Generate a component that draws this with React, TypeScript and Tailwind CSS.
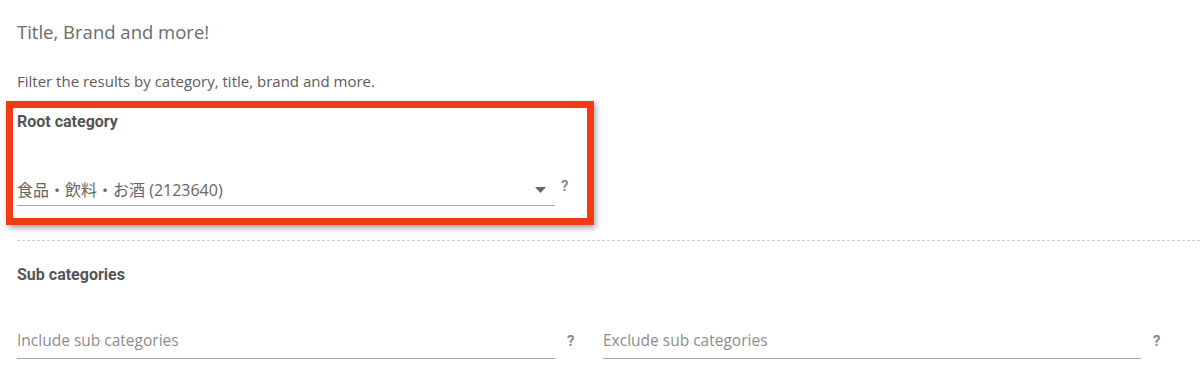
import React from 'react';

const sans = "font-['Open_Sans','Noto_Sans_CJK_JP',sans-serif]";
const bold = "font-['Roboto','Noto_Sans',sans-serif]";

const Help: React.FC<{ className?: string }> = ({ className = '' }) => (
  <span className={`${bold} text-[15px] leading-[16px] font-bold text-[#8a8a8a] ${className}`}>?</span>
);

const Field: React.FC<{ placeholder: string }> = ({ placeholder }) => (
  <div className="flex items-end">
    <div className="w-[538px] border-b border-[#a8a8a8] pb-[6px]">
      <span className={`${sans} text-[15.5px] leading-[20px] text-[#8c8c8c]`}>{placeholder}</span>
    </div>
    <Help className="ml-[12px] mb-[10px]" />
  </div>
);

const App: React.FC = () => {
  return (
    <div className="relative w-[1200px] h-[385px] overflow-hidden bg-white">
      <div className="pl-[17px] pt-[20px]">
        <h2 className={`${sans} text-[18.5px] leading-[24px] text-[#6b6b6b]`}>Title, Brand and more!</h2>
        <p className={`${sans} mt-[27px] text-[15px] leading-[20px] text-[#5c5c5c]`}>
          Filter the results by category, title, brand and more.
        </p>

        <div className={`${bold} mt-[21px] text-[16px] leading-[20px] font-bold text-[#555]`}>Root category</div>

        <div className="mt-[46px] flex items-end">
          <div className="w-[538px] flex items-center justify-between border-b border-[#a8a8a8] pb-[4px]">
            <span className={`${sans} text-[16px] leading-[22px] text-[#666]`}>
              食品・飲料・お酒 (2123640)
            </span>
            <svg width="11" height="6" viewBox="0 0 11 6" className="mr-[9px]">
              <path d="M0 0 L11 0 L5.5 6 Z" fill="#666" />
            </svg>
          </div>
          <Help className="ml-[6px] mb-[12px]" />
        </div>

        <div className="mt-[34px] border-t border-dashed border-[#d3cdd2]" />

        <div className={`${bold} mt-[24px] text-[16px] leading-[20px] font-bold text-[#555]`}>Sub categories</div>

        <div className="mt-[43px] grid grid-cols-[586px_586px]">
          <Field placeholder="Include sub categories" />
          <Field placeholder="Exclude sub categories" />
        </div>
      </div>

      <div className="absolute left-[6px] top-[101px] w-[588px] h-[124px] border-[7px] border-[#f43b14] shadow-[2px_3px_6px_rgba(0,0,0,0.35)] pointer-events-none" />
    </div>
  );
};

export default App;
